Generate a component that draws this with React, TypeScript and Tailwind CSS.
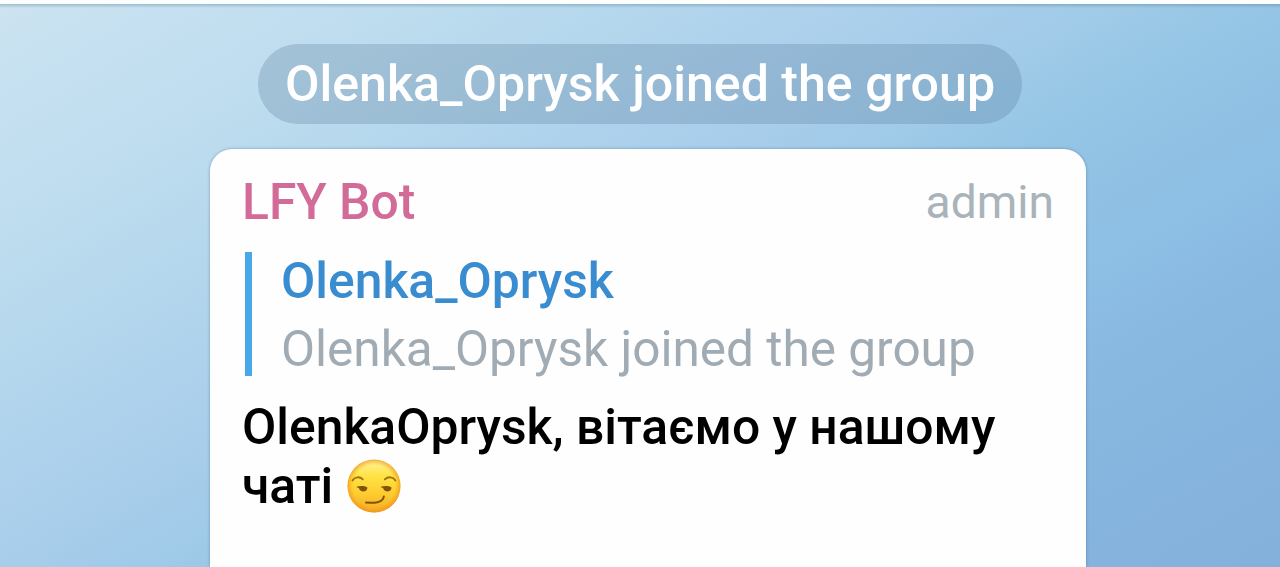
import React from 'react';

const SmirkEmoji: React.FC = () => (
    <svg viewBox="0 0 54 54" role="img" aria-label="😏" className="-mt-[2px] size-[54px] shrink-0">
        <defs>
            <linearGradient id="face" x1="0" y1="0" x2="0" y2="1">
                <stop offset="0" stopColor="#fff3a0" />
                <stop offset="0.3" stopColor="#fee445" />
                <stop offset="0.65" stopColor="#fdcc30" />
                <stop offset="1" stopColor="#f8aa24" />
            </linearGradient>
            <radialGradient id="rim" cx="0.5" cy="0.5" r="0.5">
                <stop offset="0.78" stopColor="#f5a623" stopOpacity="0" />
                <stop offset="1" stopColor="#ee8f1a" stopOpacity="0.7" />
            </radialGradient>
        </defs>
        <circle cx="27" cy="27" r="26.5" fill="url(#face)" />
        <circle cx="27" cy="27" r="26.5" fill="url(#rim)" />
        <g fill="none" stroke="#a1700f" strokeLinecap="round" strokeWidth="1.8">
            <path d="M5.5 21.5C7.5 17.8 12.5 17 15.8 20.4" />
            <path d="M37.8 20.4C41.5 17 46 17.8 48.4 21.5" />
        </g>
        <g fill="#80530b">
            <path d="M9.2 28C12.5 26.8 17 26.6 20.4 28.4C20.4 31 18.3 32.6 15.8 32.4C13.5 32.2 12.2 31 12.1 29.3Z" />
            <path d="M33.4 28C36.8 26.8 41.2 26.6 44.5 28.4C44.5 31 42.5 32.6 40 32.4C37.7 32.2 36.4 31 36.3 29.3Z" />
        </g>
        <path d="M19 43.6C27 44 35.8 44 36.8 37.6" fill="none" stroke="#80530b" strokeLinecap="round" strokeWidth="2" />
    </svg>
);

const ServiceMessage: React.FC<{ text: string }> = ({ text }) => (
    <div className="flex h-20 w-[764px] items-center justify-center rounded-full bg-[#4b708f]/25 pt-[2px] text-[50.1px] leading-none font-medium whitespace-nowrap text-white">
        {text}
    </div>
);

const Reply: React.FC<{ name: string; text: string }> = ({ name, text }) => (
    <div className="mt-[22px] ml-[3px] flex h-[124px] gap-[29px]">
        <div className="w-[7px] bg-[#48a8ea]" />
        <div className="whitespace-nowrap">
            <div className="h-[68px] text-[49.8px] leading-[58px] font-medium text-[#398ccf]">{name}</div>
            <div className="text-[49.5px] leading-[58px] text-[#a0abb4]">{text}</div>
        </div>
    </div>
);

export default function App() {
    return (
        <div className="flex h-[567px] w-[1280px] flex-col overflow-hidden bg-[#fafefe] pt-1 font-['Roboto',sans-serif]">
            <div className="flex flex-1 flex-col items-center bg-[linear-gradient(150deg,#cce3f0_0%,#c4e0f1_9%,#bddcee_19%,#b3d6ed_30%,#a9ceeb_42%,#9fcae8_50%,#94c5e5_57%,#8dbee4_69%,#87b6df_80%,#83b1dc_100%)]">
                <div className="h-1 w-full shrink-0 bg-linear-to-b from-[#537485]/35 to-transparent" />
                <div className="mt-[35.5px]">
                    <ServiceMessage text="Olenka_Oprysk joined the group" />
                </div>
                <div className="mt-[25.5px] ml-4 w-[876px] flex-1 rounded-t-[22px] bg-[#fefefe] px-8 pt-6 shadow-[0_0_3px_rgba(50,90,130,0.5)]">
                    <div className="flex h-[57px] items-center justify-between pt-[2px] leading-none">
                        <span className="text-[49.8px] font-medium text-[#d36b98]">LFY Bot</span>
                        <span className="text-[46.2px] text-[#a9b3ba]">admin</span>
                    </div>
                    <Reply name="Olenka_Oprysk" text="Olenka_Oprysk joined the group" />
                    <div className="mt-[22px] text-[49.8px] leading-[59px] font-medium whitespace-nowrap text-black">
                        <div>OlenkaOprysk, вітаємо у нашому</div>
                        <div className="flex h-[59px] items-center gap-[14px]">
                            <span>чаті</span>
                            <SmirkEmoji />
                        </div>
                    </div>
                </div>
            </div>
        </div>
    );
}
